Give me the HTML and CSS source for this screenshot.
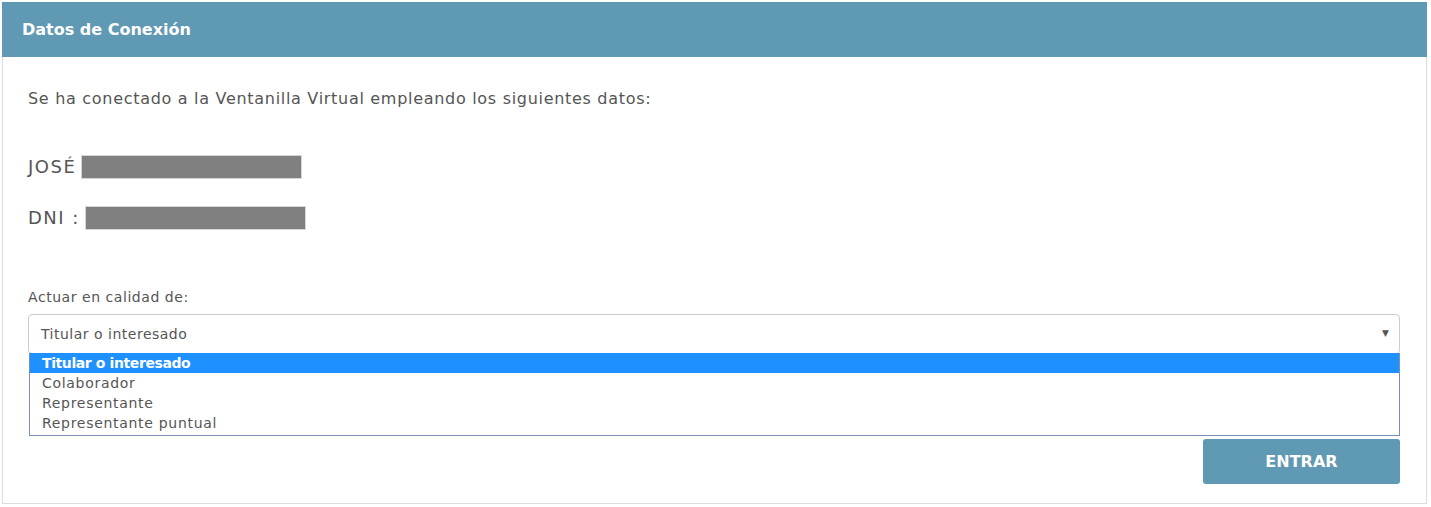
FILE: index.html
```html
<!DOCTYPE html>
<html lang="es">
<head>
  <meta charset="UTF-8">
  <title>Datos de Conexión</title>
  <link rel="stylesheet" href="styles.css">
</head>
<body>

  <div class="panel">
    <div class="panel-heading">Datos de Conexión</div>
    <div class="panel-body">
      <p class="intro">Se ha conectado a la Ventanilla Virtual empleando los siguientes datos:</p>

      <p class="ident">JOSÉ <span class="redacted"></span></p>
      <p class="ident">DNI : <span class="redacted"></span></p>

      <label class="field-label">Actuar en calidad de:</label>
      <div class="select">
        <div class="select-value">Titular o interesado</div>
        <span class="select-arrow">&#9660;</span>
        <ul class="select-list">
          <li class="is-selected">Titular o interesado</li>
          <li>Colaborador</li>
          <li>Representante</li>
          <li>Representante puntual</li>
        </ul>
      </div>

      <div class="actions">
        <button class="btn">ENTRAR</button>
      </div>
    </div>
  </div>

</body>
</html>
```

FILE: styles.css
```css
body {
  font-family: "DejaVu Sans", "Open Sans", sans-serif;
  color: #555;
  background-color: #fff;
  margin: 0;
  padding: 2px 4px 0 2px;
}

.panel {
  border: 1px solid #ddd;
  border-top: 0;
  box-shadow: 0 1px 1px rgba(0, 0, 0, 0.08);
}

.panel-heading {
  background-color: #5f99b3;
  color: #fff;
  font-size: 16px;
  font-weight: 600;
  height: 55px;
  line-height: 55px;
  padding: 0 20px;
  margin: 0 -1px;
}

.panel-body {
  padding: 26px 26px 19px 25px;
}

.intro {
  margin: 0 0 35px;
  font-size: 16px;
  line-height: 32px;
  letter-spacing: 0.7px;
}

.ident {
  margin: 0 0 18px;
  font-size: 18px;
  line-height: 33px;
  letter-spacing: 1.5px;
  display: flex;
  align-items: center;
  gap: 5px;
}

.redacted {
  display: inline-block;
  width: 219px;
  height: 22px;
  background-color: #808080;
  border: 1px solid #d6d6d6;
}

.field-label {
  display: block;
  margin-top: 53px;
  margin-bottom: 7px;
  font-size: 14px;
  line-height: 20px;
  letter-spacing: 0.55px;
}

.select {
  position: relative;
  height: 38px;
  border: 1px solid #ccc;
  border-radius: 4px;
}

.select-value {
  font-size: 14px;
  line-height: 38px;
  padding-left: 12px;
  letter-spacing: 0.5px;
}

.select-arrow {
  position: absolute;
  right: 10px;
  top: 13px;
  font-size: 9px;
  color: #555;
}

.select-list {
  position: absolute;
  left: 0;
  right: -1px;
  top: 38px;
  margin: 0;
  padding: 0 0 2px;
  list-style: none;
  background-color: #fff;
  border: 1px solid #7a8fb5;
  border-top: 0;
  z-index: 2;
}

.select-list li {
  font-size: 14px;
  line-height: 20px;
  padding-left: 12px;
  letter-spacing: 0.7px;
  color: #555;
}

.select-list .is-selected {
  background-color: #1e90ff;
  color: #fff;
  font-weight: 600;
  letter-spacing: -0.4px;
}

.actions {
  display: flex;
  justify-content: flex-end;
  margin-top: 85px;
}

.btn {
  width: 197px;
  height: 45px;
  border: 0;
  border-radius: 3px;
  background-color: #5f99b3;
  color: #fff;
  font-family: inherit;
  font-size: 16px;
  font-weight: 700;
  cursor: pointer;
}
```
